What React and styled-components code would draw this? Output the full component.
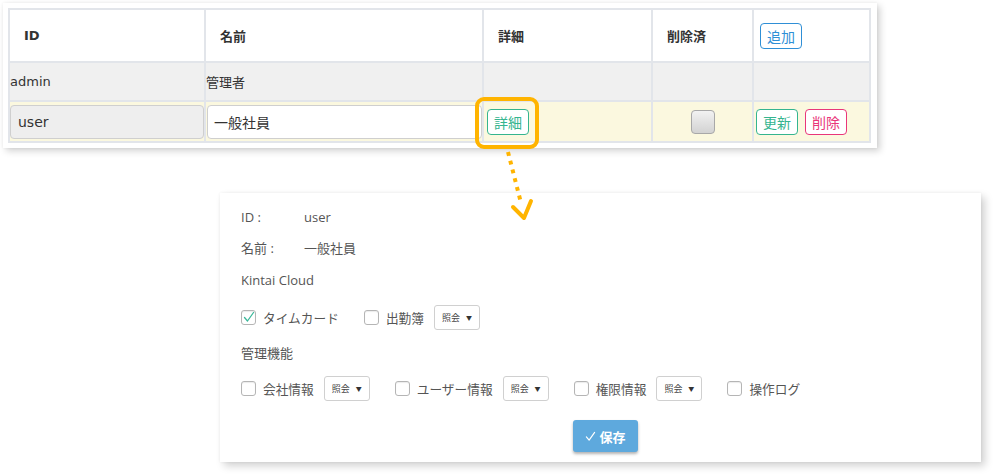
import React from "react";
import styled, { createGlobalStyle } from "styled-components";

const Global = createGlobalStyle`
  html, body { margin: 0; padding: 0; background: #fff; }
  body { font-family: "DejaVu Sans", "Noto Sans CJK JP", sans-serif; }
`;

const Page = styled.div`
  position: relative;
  width: 994px;
  height: 476px;
  overflow: hidden;
  padding: 3px 0 0 3px;
  box-sizing: border-box;
`;

const TablePanel = styled.div`
  width: 874px;
  box-sizing: border-box;
  padding: 5px 8px 5px 5px;
  background: #fff;
  box-shadow: 3px 3px 7px rgba(0, 0, 0, 0.18), 0 0 3px rgba(0, 0, 0, 0.06);
`;

const Table = styled.table`
  border-collapse: collapse;
  table-layout: fixed;
  width: 861px;
  font-size: 13px;
  color: #333;
  td, th { border: 2px solid #e2e5ea; }
`;

const HeadCell = styled.th`
  height: 51px;
  padding: 0 0 0 ${(p) => p.$pl || 15}px;
  text-align: left;
  font-weight: bold;
  font-family: "DejaVu Sans", "Noto Sans CJK JP", sans-serif;
  font-size: 13px;
  color: #333;
  background: #fff;
`;

const Row = styled.tr`
  background: ${(p) => p.$bg};
`;

const Cell = styled.td`
  height: ${(p) => p.$h || 35}px;
  padding: 0 ${(p) => p.$pr ?? 1}px 0 ${(p) => p.$pl ?? 1}px;
  vertical-align: middle;
  text-align: ${(p) => (p.$center ? "center" : "left")};
  white-space: nowrap;
`;

const Input = styled.div`
  height: 34px;
  box-sizing: border-box;
  border: 1px solid #cfcfcf;
  border-radius: 4px;
  background: ${(p) => (p.$readonly ? "#eeeeee" : "#fff")};
  font-size: 14px;
  color: #333;
  display: flex;
  align-items: center;
  padding-left: ${(p) => (p.$readonly ? 7 : 6)}px;
`;

const Btn = styled.button`
  height: 26px;
  padding: 0 6px;
  border: 1.5px solid ${(p) => p.$c};
  border-radius: 4px;
  background: #fff;
  color: ${(p) => p.$c};
  font-family: "Noto Sans CJK JP", sans-serif;
  font-size: 14px;
  line-height: 1;
  vertical-align: middle;
  & + & { margin-left: 7px; }
`;

const Highlight = styled.span`
  position: relative;
  display: inline-block;
  vertical-align: middle;
  &::after {
    content: "";
    position: absolute;
    inset: -12px -10px -14px -12px;
    border: 4px solid #ffb400;
    border-radius: 9px;
    pointer-events: none;
  }
`;

const GrayBox = styled.span`
  display: inline-block;
  width: 24px;
  height: 24px;
  box-sizing: border-box;
  border: 1px solid #a8a8a8;
  border-radius: 4px;
  background: linear-gradient(#f2f2f2, #d2d2d2);
  vertical-align: middle;
`;

const Arrow = styled.svg`
  position: absolute;
  left: 495px;
  top: 145px;
  overflow: visible;
`;

const DetailPanel = styled.div`
  margin: 45px 0 0 217px;
  width: 761px;
  height: 269px;
  box-sizing: border-box;
  background: #fff;
  box-shadow: 4px 4px 8px rgba(0, 0, 0, 0.18), 0 0 3px rgba(0, 0, 0, 0.06);
  padding: 8px 0 0 21px;
  display: flex;
  flex-direction: column;
  font-family: "Open Sans", "Noto Sans CJK JP", sans-serif;
  font-size: 13px;
  color: #555;
`;

const Line = styled.div`
  height: ${(p) => p.$h}px;
  display: flex;
  align-items: center;
`;

const Label = styled.span`
  width: 63px;
`;

const Option = styled.label`
  display: flex;
  align-items: center;
  font-size: 12.7px;
  margin-right: ${(p) => p.$mr ?? 25}px;
`;

const Box = styled.span`
  width: 15px;
  height: 15px;
  box-sizing: border-box;
  border: 1px solid #b5b5b5;
  border-radius: 3px;
  background: #fff;
  box-shadow: inset 0 1px 1px rgba(0, 0, 0, 0.08);
  margin-right: 7px;
  display: flex;
  align-items: center;
  justify-content: center;
`;

const Select = styled.span`
  display: inline-flex;
  align-items: center;
  justify-content: space-between;
  width: 46px;
  height: 25px;
  box-sizing: border-box;
  border: 1px solid #d0d0d0;
  border-radius: 3px;
  padding: 0 7px 0 7px;
  margin-left: 10px;
  font-size: 9px;
  color: #444;
  background: #fff;
`;

const Caret = styled.span`
  font-size: 6px;
  color: #333;
`;

const SaveRow = styled.div`
  margin-top: 10px;
  padding-left: 332px;
`;

const SaveBtn = styled.button`
  width: 65px;
  height: 32px;
  border: none;
  border-radius: 3px;
  background: #5ea9dd;
  color: #fff;
  font-family: "Noto Sans CJK JP", sans-serif;
  font-size: 13px;
  font-weight: bold;
  box-shadow: 0 2px 3px rgba(0, 0, 0, 0.3);
  display: flex;
  align-items: center;
  justify-content: center;
  gap: 3px;
`;

const Check = ({ color = "#3bb89a", size = 12 }) => (
  <svg width={size} height={size} viewBox="0 0 12 12">
    <path d="M1.5 6.5 L4.5 10 L10.5 1.5" fill="none" stroke={color} strokeWidth="1.3" strokeLinecap="round" strokeLinejoin="round" />
  </svg>
);

const Perm = ({ label, checked, select, mr }) => (
  <Option $mr={mr}>
    <Box>{checked && <Check />}</Box>
    {label}
    {select && (
      <Select>
        照会<Caret>▼</Caret>
      </Select>
    )}
  </Option>
);

export default function App() {
  return (
    <>
      <Global />
      <Page>
        <TablePanel>
          <Table>
            <colgroup>
              <col style={{ width: 196 }} />
              <col style={{ width: 278 }} />
              <col style={{ width: 169 }} />
              <col style={{ width: 101 }} />
              <col style={{ width: 117 }} />
            </colgroup>
            <thead>
              <tr>
                <HeadCell $pl={14}>ID</HeadCell>
                <HeadCell $pl={14}>名前</HeadCell>
                <HeadCell $pl={14}>詳細</HeadCell>
                <HeadCell $pl={14}>削除済</HeadCell>
                <HeadCell $pl={6}>
                  <Btn $c="#2f8fd6">追加</Btn>
                </HeadCell>
              </tr>
            </thead>
            <tbody>
              <Row $bg="#f0f0f0">
                <Cell $h={37} $pl={0}>admin</Cell>
                <Cell $h={37} $pl={0}>管理者</Cell>
                <Cell $h={37} />
                <Cell $h={37} />
                <Cell $h={37} />
              </Row>
              <Row $bg="#fbf8df">
                <Cell $h={39} $pl={0} $pr={0}>
                  <Input $readonly>user</Input>
                </Cell>
                <Cell $h={39} $pl={1} $pr={0}>
                  <Input>一般社員</Input>
                </Cell>
                <Cell $h={39} $pl={3}>
                  <Highlight>
                    <Btn $c="#35b58f">詳細</Btn>
                  </Highlight>
                </Cell>
                <Cell $h={39} $center>
                  <GrayBox />
                </Cell>
                <Cell $h={39} $pl={2}>
                  <Btn $c="#35b58f">更新</Btn>
                  <Btn $c="#e9367a">削除</Btn>
                </Cell>
              </Row>
            </tbody>
          </Table>
        </TablePanel>

        <Arrow width="40" height="80" viewBox="0 0 40 80">
          <line x1="13" y1="7" x2="26" y2="58" stroke="#ffb400" strokeWidth="4" strokeDasharray="4 5" />
          <polyline points="18,62 29,73 36,56" fill="none" stroke="#ffb400" strokeWidth="4" strokeLinecap="round" strokeLinejoin="round" />
        </Arrow>

        <DetailPanel>
          <Line $h={31}>
            <Label>ID :</Label>user
          </Line>
          <Line $h={31}>
            <Label>名前 :</Label>一般社員
          </Line>
          <Line $h={33}>Kintai Cloud</Line>
          <Line $h={42}>
            <Perm label="タイムカード" checked />
            <Perm label="出勤簿" select />
          </Line>
          <Line $h={28}>管理機能</Line>
          <Line $h={44}>
            <Perm label="会社情報" select />
            <Perm label="ユーザー情報" select />
            <Perm label="権限情報" select />
            <Perm label="操作ログ" />
          </Line>
          <SaveRow>
            <SaveBtn>
              <Check color="#fff" size={11} />
              保存
            </SaveBtn>
          </SaveRow>
        </DetailPanel>
      </Page>
    </>
  );
}
